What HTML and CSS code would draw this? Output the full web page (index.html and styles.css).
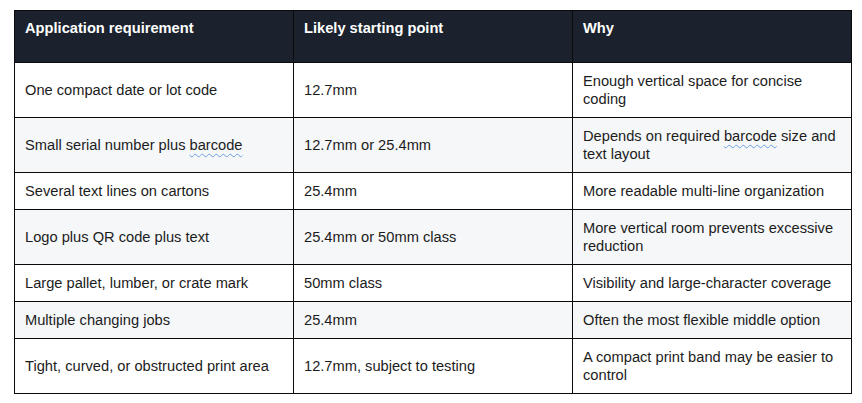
FILE: index.html
```html
<!DOCTYPE html>
<html>
<head>
<meta charset="utf-8">
<link rel="stylesheet" href="styles.css">
</head>
<body>
<div class="wrap">
<table class="grid">
  <colgroup>
    <col class="c1"><col class="c2"><col class="c3">
  </colgroup>
  <thead>
    <tr><th>Application requirement</th><th>Likely starting point</th><th>Why</th></tr>
  </thead>
  <tbody>
    <tr><td>One compact date or lot code</td><td>12.7mm</td><td>Enough vertical space for concise coding</td></tr>
    <tr class="alt"><td>Small serial number plus <span class="spell">barcode</span></td><td>12.7mm or 25.4mm</td><td>Depends on required <span class="spell">barcode</span> size and text layout</td></tr>
    <tr><td>Several text lines on cartons</td><td>25.4mm</td><td>More readable multi-line organization</td></tr>
    <tr class="alt"><td>Logo plus QR code plus text</td><td>25.4mm or 50mm class</td><td>More vertical room prevents excessive reduction</td></tr>
    <tr><td>Large pallet, lumber, or crate mark</td><td>50mm class</td><td>Visibility and large-character coverage</td></tr>
    <tr class="alt"><td>Multiple changing jobs</td><td>25.4mm</td><td>Often the most flexible middle option</td></tr>
    <tr><td>Tight, curved, or obstructed print area</td><td>12.7mm, subject to testing</td><td>A compact print band may be easier to control</td></tr>
  </tbody>
</table>
</div>
</body>
</html>
```

FILE: styles.css
```css
html, body {
  margin: 0;
  padding: 0;
  background: #ffffff;
}
.wrap {
  padding: 10px 0 0 14px;
}
.grid {
  border-collapse: collapse;
  table-layout: fixed;
  width: 837px;
  font-family: "Liberation Sans", Arial, sans-serif;
  font-size: 14.67px;
  line-height: 18px;
  color: #1c1c1c;
}
.c1 { width: 279px; }
.c2 { width: 279px; }
.c3 { width: 279px; }
.grid th,
.grid td {
  border: 1px solid #0a0a0a;
  text-align: left;
  vertical-align: middle;
  padding: 9px 10px;
}
.grid td:first-child { padding-left: 10px; }
.grid th {
  background: #1b222d;
  color: #ffffff;
  font-weight: bold;
  vertical-align: top;
  height: 34px;
  padding-top: 8px;
}
.grid tr.alt td {
  background: #f5f7f9;
}
.spell {
  text-decoration: underline wavy #6a9ee6;
  text-decoration-thickness: 1px;
  text-underline-offset: 3px;
}
```
